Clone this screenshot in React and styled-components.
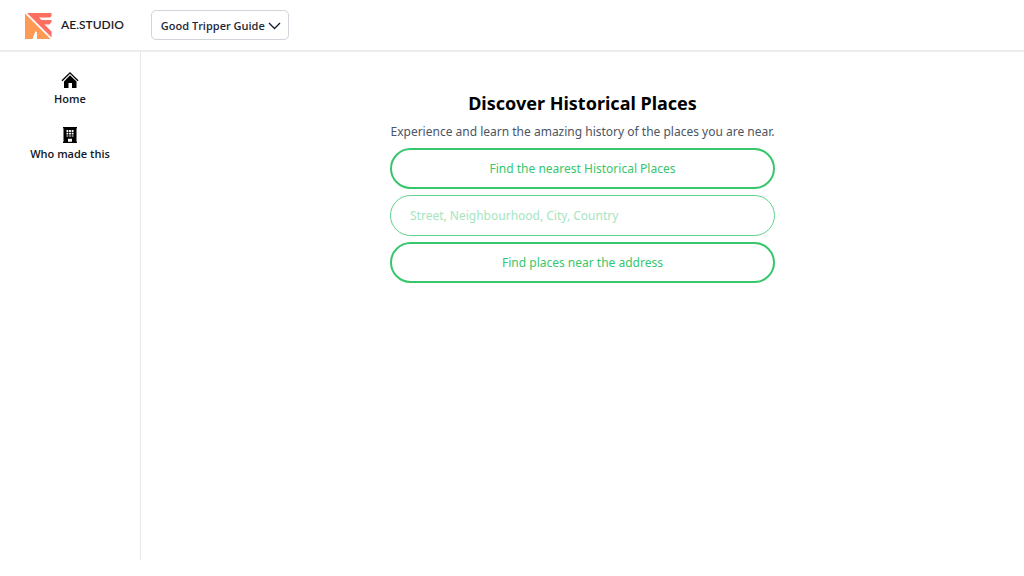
import React from "react";
import styled, { createGlobalStyle } from "styled-components";

const Global = createGlobalStyle`
  *, *::before, *::after { box-sizing: border-box; }
  body { margin: 0; background: #fff; color: #000; font-family: "Segoe UI", "Noto Sans", "Open Sans", sans-serif; }
  button, input { font: inherit; }
`;

const Page = styled.div`
  display: flex;
  flex-direction: column;
  height: calc(100vh - 16px);
`;

const Header = styled.header`
  display: flex;
  align-items: center;
  gap: 27px;
  height: 52px;
  flex: none;
  padding: 0 24px;
  border-bottom: 2px solid #ececee;
`;

const Brand = styled.a`
  display: flex;
  align-items: center;
  gap: 9px;
  color: #1c1c1e;
  text-decoration: none;
  font: 600 12px/16px Lato, sans-serif;
`;

const Mark = styled.svg`
  display: block;
  width: 28px;
  height: 28px;
`;

const Picker = styled.button`
  display: flex;
  align-items: center;
  gap: 3px;
  height: 30px;
  padding: 0 7px 0 9px;
  border: 1px solid #d1d5db;
  border-radius: 5px;
  background: #fff;
  color: #1f2937;
  font-family: "Segoe UI", "Open Sans", sans-serif;
  font-size: 11px;
  font-weight: 600;
`;

const Body = styled.div`
  display: flex;
  flex: 1;
`;

const Sidebar = styled.nav`
  display: flex;
  flex-direction: column;
  gap: 19px;
  width: 141px;
  flex: none;
  padding-top: 19px;
  border-right: 1px solid #e5e7eb;
`;

const NavLink = styled.a`
  display: flex;
  flex-direction: column;
  align-items: center;
  gap: 2px;
  color: #111827;
  text-decoration: none;
  font-family: "Segoe UI", "Open Sans", sans-serif;
  font-size: 11px;
  font-weight: 600;
  line-height: 16px;
`;

const NavIcon = styled.svg`
  display: block;
  width: 18px;
  height: 18px;
  fill: #000;
`;

const Main = styled.main`
  display: flex;
  flex: 1;
  justify-content: center;
  align-items: flex-start;
  padding-top: 38px;
`;

const Search = styled.form`
  display: flex;
  flex-direction: column;
  gap: 6px;
  width: 385px;
`;

const Title = styled.h1`
  margin: 0;
  font-size: 18px;
  font-weight: 700;
  line-height: 26px;
  text-align: center;
`;

const Lead = styled.p`
  margin: 0;
  color: #4b5563;
  font-size: 12px;
  line-height: 20px;
  text-align: center;
  white-space: nowrap;
`;

const PillButton = styled.button`
  height: 41px;
  border: 2px solid #36c76c;
  border-radius: 21px;
  background: #fff;
  color: #36c76c;
  font-size: 12px;
`;

const AddressInput = styled.input`
  height: 41px;
  padding: 0 19px;
  border: 1px solid #5dd38a;
  border-radius: 21px;
  background: #fff;
  color: #36c76c;
  font-size: 12px;
  &::placeholder { color: #a5e5bf; opacity: 1; }
`;

export default function App() {
  return (
    <Page>
      <Global />
      <Header>
        <Brand href="#">
          <Mark viewBox="0 0 28 28" aria-hidden="true">
            <path d="M1 2.500L26.500 28H13V21.500L11.500 20L8.500 28H1Z" fill="#ff9a56" />
            <path d="M3 2H27.500V5L26 6.500H15L17.500 9H27.500V11L25.500 13.500H20.500L27.500 20.500V26.500Z" fill="#ff6f61" />
          </Mark>
          AE.STUDIO
        </Brand>
        <Picker type="button">
          Good Tripper Guide
          <svg width="13" height="13" viewBox="0 0 13 13" aria-hidden="true">
            <path d="M1 4L6.500 9.500L12 4" fill="none" stroke="#111827" strokeWidth="1.300" />
          </svg>
        </Picker>
      </Header>
      <Body>
        <Sidebar>
          <NavLink href="#">
            <NavIcon viewBox="0 0 18 18" aria-hidden="true">
              <path d="M9 4.200L15.500 10.500V17H11V12H7.500V17H3V10.500Z" />
              <path d="M1 9.800L9 1.800L17 9.800" fill="none" stroke="#000" strokeWidth="1.300" />
            </NavIcon>
            Home
          </NavLink>
          <NavLink href="#">
            <NavIcon viewBox="0 0 18 18" aria-hidden="true">
              <path fillRule="evenodd" d="M2 1H16V2.200H15.500V15.800H16V17H2V15.800H2.500V2.200H2ZM5.500 4V5.900H7.300V4ZM8.100 4V5.900H9.900V4ZM10.700 4V5.900H12.500V4ZM5.500 6.700V8.600H7.300V6.700ZM8.100 6.700V8.600H9.900V6.700ZM10.700 6.700V8.600H12.500V6.700ZM5.500 9.400V10.400H7.300V9.400ZM8.100 9.400V10.400H9.900V9.400ZM10.700 9.400V10.400H12.500V9.400ZM7 12.800V15.800H11V12.800Z" />
            </NavIcon>
            Who made this
          </NavLink>
        </Sidebar>
        <Main>
          <Search onSubmit={(e) => e.preventDefault()}>
            <Title>Discover Historical Places</Title>
            <Lead>Experience and learn the amazing history of the places you are near.</Lead>
            <PillButton type="button">Find the nearest Historical Places</PillButton>
            <AddressInput aria-label="Address" placeholder="Street, Neighbourhood, City, Country" />
            <PillButton type="submit">Find places near the address</PillButton>
          </Search>
        </Main>
      </Body>
    </Page>
  );
}
